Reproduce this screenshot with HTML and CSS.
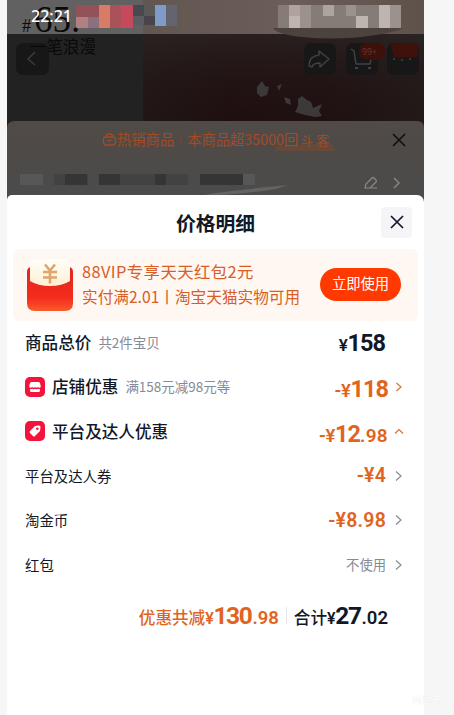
FILE: index.html
```html
<!DOCTYPE html>
<html lang="zh-CN">
<head>
<meta charset="utf-8">
<title>价格明细</title>
<link rel="stylesheet" href="styles.css">
</head>
<body>
<main class="phone">
  <section class="backdrop">
    <svg class="photo" width="417" height="206" viewBox="7 0 417 206">
      <defs>
        <linearGradient id="top" x1="0" x2="1"><stop offset="0" stop-color="#625750"/><stop offset=".5" stop-color="#6b5d59"/><stop offset="1" stop-color="#5f524a"/></linearGradient>
        <linearGradient id="wine" x1="0" x2="1"><stop offset="0" stop-color="#231d1b"/><stop offset=".3" stop-color="#201112"/><stop offset=".65" stop-color="#211314"/><stop offset="1" stop-color="#25211f"/></linearGradient>
        <linearGradient id="shade" x1="0" x2="0" y1="0" y2="1"><stop offset="0" stop-color="#2b2422" stop-opacity=".8"/><stop offset="1" stop-color="#1c090b" stop-opacity=".3"/></linearGradient>
        <linearGradient id="card" x1="0" x2="0" y1="0" y2="1"><stop offset="0" stop-color="#514b46"/><stop offset=".45" stop-color="#4d4a48"/><stop offset="1" stop-color="#4c4c4c"/></linearGradient>
      </defs>
      <rect x="7" width="136" height="34" fill="#616161"/>
      <rect x="143" width="281" height="34" fill="url(#top)"/>
      <rect x="7" y="34" width="136" height="88" fill="#222222"/>
      <rect x="143" y="34" width="281" height="88" fill="url(#wine)"/>
      <rect x="143" y="34" width="281" height="88" fill="url(#shade)"/>
      <path d="M273 28h131q-9 4-28 7-35 6-75 2-25-3-28-9z" fill="#4d433e"/>
      <path d="M257 87l5-6 3 5 4 1-2 8-6 2-4-4zM277 86l5-2-3 7zM284 97l6 2 1 6-5-2zM298 99l4-3 5 4 4 2 2 6 9-4-3 7 3 5-7 1-10-2-10-3 3-6z" fill="#3c3939"/>
      <rect x="7" y="121" width="417" height="85" fill="#241e1d"/>
      <path d="M7 206V128q0-7 8-7H416q8 0 8 7v78z" fill="url(#card)"/>
      <path d="M276 146l55-3 4 8-60 0z" fill="#65493a"/>
      <path d="M204 195q20-4 84-10l-12 4q-30 5-72 7z" fill="#636363"/>
      <g id="mosaics" shape-rendering="crispEdges">
        <path d="M76 5h23v12H76z" fill="#955158"/><path d="M99 5h11v23H99z" fill="#d97c67"/><path d="M110 5h11v23h-11z" fill="#aa5259"/><path d="M121 5h12v23h-12z" fill="#c64a5b"/>
        <path d="M76 17h12v11H76z" fill="#b18083"/><path d="M88 17h11v11H88z" fill="#8b7180"/><path d="M133 5h11v11h-11z" fill="#47494e"/><path d="M144 5h11v11h-11z" fill="#5b5957"/>
        <path d="M133 16h11v9h-11z" fill="#5c5d62"/><path d="M144 16h11v9h-11z" fill="#49434a"/><path d="M155 5h11v21h-11z" fill="#7e9cc7"/><path d="M166 5h11v21h-11z" fill="#62656d"/>
        <path d="M278 5h123v23H278z" fill="#857b77"/><path d="M289 5h11v11h-11zM323 5h11v11h-11z" fill="#aea39f"/><path d="M289 16h11v12h-11zM356 16h12v12h-12zM379 5h11v23h-11z" fill="#beb5b1"/><path d="M300 5h11v23h-11zM346 5h10v11h-10zM390 5h11v23h-11z" fill="#9c918d"/>
        <path d="M20 174h235v11H20z" fill="#424242"/><path d="M20 174h23v11H20zM243 174h12v11h-12z" fill="#575757"/><path d="M43 174h11v11H43z" fill="#4b4b4b"/><path d="M65 174h22v11H65zM99 174h21v11H99zM155 174h11v11h-11zM200 174h43v11h-43z" fill="#353535"/><path d="M88 174h11v11H88zM188 174h12v11h-12z" fill="#4b4b4b"/>
      </g>
      <g fill="#171717"><rect x="16" y="43" width="33" height="32" rx="7"/><rect x="304" y="43" width="32" height="32" rx="7"/><rect x="346" y="43" width="32" height="32" rx="7"/><rect x="387" y="43" width="32" height="32" rx="7"/></g>
      <path d="M35 52l-7 7 7 6" fill="none" stroke="#3c3c3c" stroke-width="1.500"/>
      <g fill="none" stroke="#434141" stroke-width="1.500" stroke-linejoin="round"><path d="M309 66q0-10 10-11v-4l10 8-9 8v-4q-7 0-8 4z"/><path d="M351 49l3 2 2 13h14l2-9"/></g>
      <path d="M355 67h3v2h-3zM368 67h3v2h-3z" fill="#434141"/>
      <rect x="359" y="43" width="26" height="17" rx="8" fill="#3d100a"/><path d="M391 45q2-2 5-2h18q4 0 4 4v10h-24z" fill="#40100a"/>
      <path d="M393 59h2M401 60h2M409 59h2" stroke="#3c3532" stroke-width="2"/>
    </svg>
    <span class="poster poster-hash">#</span><span class="poster poster-number">65.</span>
    <span class="poster poster-line">一笔浪漫</span>
    <span class="cart-count">99+</span>
    <div class="status">22:21</div>
    <div class="hot">
      <svg width="15" height="15" viewBox="0 0 15 15" fill="none" stroke="#a04c27" stroke-width="1.300"><path d="M3.500 5h8q2 0 2 2v3q0 3-3 3h-6q-3 0-3-3V7q0-2 2-2zM4 5q0-3 3.500-3T11 5M5 8q2.500 2 5 0"/></svg>
      <span>热销商品</span><i></i><span class="hot-count">本商品超35000回<small>斗 客</small></span>
      <svg class="hot-close" width="14" height="14" viewBox="0 0 14 14" fill="none" stroke="#111" stroke-width="1.700"><path d="M1 1l12 12M13 1L1 13"/></svg>
    </div>
    <div class="address">
      <svg width="14" height="14" viewBox="0 0 14 14" fill="none" stroke="#898989" stroke-width="1.200"><path d="M1 12l1-4 6-6q1-1 2 0l2 2q1 1 0 2l-6 6zM7 12h6"/></svg>
      <svg width="8" height="12" viewBox="0 0 8 12" fill="none" stroke="#898989" stroke-width="1.400"><path d="M1 1l5 5-5 5"/></svg>
    </div>
  </section>

  <section class="sheet">
    <header><h1>价格明细</h1>
      <button class="close"><svg width="14" height="14" viewBox="0 0 14 14" fill="none" stroke="#111827" stroke-width="1.700"><path d="M1 1l12 12M13 1L1 13"/></svg></button>
    </header>
    <div class="promo">
      <svg class="envelope" width="46" height="52" viewBox="0 0 46 52">
        <defs><linearGradient id="red" x1="0" x2="0" y1="0" y2="1"><stop offset="0" stop-color="#e02620"/><stop offset=".7" stop-color="#f42c1c"/><stop offset="1" stop-color="#fa5b2c"/></linearGradient><linearGradient id="cream" x1="0" x2="0" y1="0" y2="1"><stop offset="0" stop-color="#fffefa"/><stop offset="1" stop-color="#fff0d2"/></linearGradient></defs>
        <path d="M0 13q0-5 5-5h36q5 0 5 5v31q0 8-8 8H8q-8 0-8-8z" fill="url(#red)"/>
        <path d="M3 5q0-5 6-5h28q6 0 6 5v17q-8 5-20 5T3 22z" fill="url(#cream)"/>
        <path d="M18 5.500l5 6 5-6M23 12v12.500M16 13h14M16 18.500h14" fill="none" stroke="#dfa56d" stroke-width="2.600"/>
      </svg>
      <div class="promo-text"><p class="promo-a">88VIP专享天天红包2元</p><p class="promo-b">实付满2.01丨淘宝天猫实物可用</p></div>
      <button class="use">立即使用</button>
    </div>
    <div class="rows">
      <div class="row total"><b>商品总价</b><small>共2件宝贝</small><span class="amount dark"><em>¥</em>158</span></div>
      <div class="row">
        <svg class="badge" width="20" height="20" viewBox="0 0 20 20"><rect width="20" height="20" rx="5" fill="#f3133b"/><path d="M6.500 5h7q1.500 0 1.800 2l.5 3q-1.500 1.500-3 0-1.400 1.500-2.800 0-1.400 1.500-2.800 0-1.500 1.500-3 0l.5-3q.3-2 1.800-2zM5 12q1.200.5 2.200-.3 1.400 1 2.800 0 1.400 1 2.800 0 1 .8 2.200.3v1.500q0 1.500-1.500 1.500h-7Q5 15 5 13.500z" fill="#fff"/></svg>
        <b>店铺优惠</b><small>满158元减98元等</small><span class="amount low"><em>-¥</em>118</span>
        <svg class="arrow warm" width="8" height="10" viewBox="0 0 8 10"><path d="M1.500 1l4.500 4-4.500 4"/></svg>
      </div>
      <div class="row">
        <svg class="badge" width="20" height="20" viewBox="0 0 20 20"><rect width="20" height="20" rx="5" fill="#f3133b"/><path d="M10 5l4-.5q1.500 0 1.500 1.500l-.5 4-5 5q-1 1-2 0l-3-3q-1-1 0-2z" fill="#fff"/><circle cx="12.300" cy="7.700" r="1.300" fill="#f3133b"/></svg>
        <b>平台及达人优惠</b><span class="amount platform"><em>-¥</em>12<i>.98</i></span>
        <svg class="arrow warm up" width="10" height="7" viewBox="0 0 10 7"><path d="M1 5.500l4-4 4 4"/></svg>
      </div>
      <div class="row"><span>平台及达人券</span><span class="amount sub">-¥4</span><svg class="arrow" width="8" height="12" viewBox="0 0 8 12"><path d="M1 1.500L6 6l-5 4.500"/></svg></div>
      <div class="row"><span>淘金币</span><span class="amount sub">-¥8.98</span><svg class="arrow" width="8" height="12" viewBox="0 0 8 12"><path d="M1 1.500L6 6l-5 4.500"/></svg></div>
      <div class="row"><span>红包</span><span class="unused">不使用</span><svg class="arrow" width="8" height="12" viewBox="0 0 8 12"><path d="M1 1.500L6 6l-5 4.500"/></svg></div>
    </div>
    <footer>
      <span class="saved"><b>优惠共减</b><span class="num"><em>¥</em>130<i>.98</i></span></span>
      <span class="rule"></span>
      <span class="final"><b>合计</b><span class="num"><em>¥</em>27<i>.02</i></span></span>
    </footer>
  </section>
</main>
<span class="watermark">可颂元</span>
</body>
</html>
```

FILE: styles.css
```css
* { box-sizing: border-box; }
body {
  margin: 0; width: 454px; height: 715px; overflow: hidden; position: relative;
  background: #f6f6f6; color: #111827;
  font-family: "Noto Sans CJK SC", sans-serif; font-size: 14.4px; line-height: 1;
}
p, h1 { margin: 0; }
button { border: 0; padding: 0; font: inherit; }
em, i { font-style: normal; }
b { font-weight: 500; }
svg { flex: none; display: block; }
.phone { width: 417px; height: 715px; margin-left: 7px; display: flex; flex-direction: column; }

.backdrop { height: 195px; position: relative; flex: none; display: flex; flex-direction: column; }
.photo { position: absolute; left: 0; top: 0; }
.poster { position: absolute; color: #090909; font-family: "Liberation Serif", "Noto Sans CJK SC", serif; white-space: nowrap; }
.poster-hash { left: 15px; top: 17px; font-size: 18px; }
.poster-number { left: 27px; top: 1px; font-size: 37px; }
.poster-line { left: 23px; top: 40px; font-size: 16.5px; }
.cart-count { position: absolute; left: 355px; top: 47px; color: #63382e; font-size: 9px; }
.status { position: relative; height: 34px; padding: 8px 0 0 24px; color: #fff; font: 500 16px/16px "Noto Sans", sans-serif; }
.hot { position: relative; height: 37px; margin-top: 87px; padding-left: 95px; display: flex; align-items: center; color: #a04c27; font-size: 14.3px; white-space: nowrap; }
.hot i { width: 1px; height: 9px; background: #6c4936; margin: 0 6px; }
.hot small { font-size: 13px; margin-left: 2px; }
.hot-close { margin: 0 18px 0 auto; }
.address { position: relative; flex: 1; display: flex; justify-content: flex-end; align-items: center; gap: 15px; padding: 13px 23px 0 0; }

.sheet { position: relative; flex: 1; background: #fff; border-radius: 5px 7px 0 0; }
header { height: 54px; display: flex; align-items: center; justify-content: flex-end; padding-right: 12px; position: relative; }
h1 { width: 100%; padding-left: 43px; text-align: center; font-size: 19.8px; font-weight: 700; padding-top: 1px; }
.close { flex: none; width: 31px; height: 31px; border-radius: 4px; background: #f5f5f8; display: grid; place-items: center; }
.promo { height: 72px; margin: 0 6px; padding: 0 17px 1px 14px; border-radius: 6px; background: #fef7f2; display: flex; align-items: center; }
.promo-text { margin-left: 9px; flex: 1; color: #d95d25; white-space: nowrap; display: flex; flex-direction: column; gap: 10px; padding-bottom: 1px; }
.promo-a { font-size: 16.4px; letter-spacing: .4px; }
.promo-b { font-size: 15.65px; }
.use { flex: none; width: 81px; height: 33px; border-radius: 17px; background: #ff3900; color: #fff; font-size: 14.3px; padding-bottom: 2px; }
.rows { padding: 0 21px 0 18px; margin-top: -1px; }
.row { height: 44.5px; display: flex; align-items: center; white-space: nowrap; }
.row b { font-size: 16.6px; }
.row small { font-size: 13.5px; color: #858b96; margin-left: 7px; }
.badge { margin-right: 7px; }
.arrow { margin-left: 9px; fill: none; stroke: #858b96; stroke-width: 1.2; }
.arrow.warm { stroke: #d9713c; margin-left: 7px; }
.arrow.up { margin: 0 -1px 0 6px; }
.amount, .num { font-family: Roboto, sans-serif; font-weight: 700; }
.amount { margin-left: auto; color: #e0641e; font-size: 23.5px; letter-spacing: -1px; }
.amount em { font-size: 18.5px; font-weight: 600; letter-spacing: -.3px; }
.amount i { font-size: 19px; letter-spacing: .3px; font-weight: 600; }
.amount.dark { color: #111827; margin-right: 18px; padding-top: 2px; }
.dark em { font-size: 17px; }
.amount.low { padding-top: 5px; }
.amount.platform { padding-top: 7px; }
.amount.sub { font-size: 19.5px; letter-spacing: .2px; font-weight: 600; }
.unused { margin-left: auto; color: #858b96; font-size: 13.3px; }
footer { display: flex; align-items: baseline; height: 44px; margin-top: 17px; padding-right: 36px; justify-content: flex-end; white-space: nowrap; }
footer b { font-size: 16.6px; }
.saved { color: #e0641e; }
.num { font-size: 24.5px; letter-spacing: -1.4px; }
.num em { font-size: 16px; font-weight: 600; letter-spacing: -.3px; }
.num i { font-size: 18.5px; letter-spacing: 0; font-weight: 600; margin-left: 1px; }
.rule { width: 1px; height: 17px; background: #e8e8ea; margin: 0 7px; }
.watermark { position: absolute; left: 412px; top: 695px; font-size: 10px; color: #fff; text-shadow: 0 0 1px #ddd; }
```
